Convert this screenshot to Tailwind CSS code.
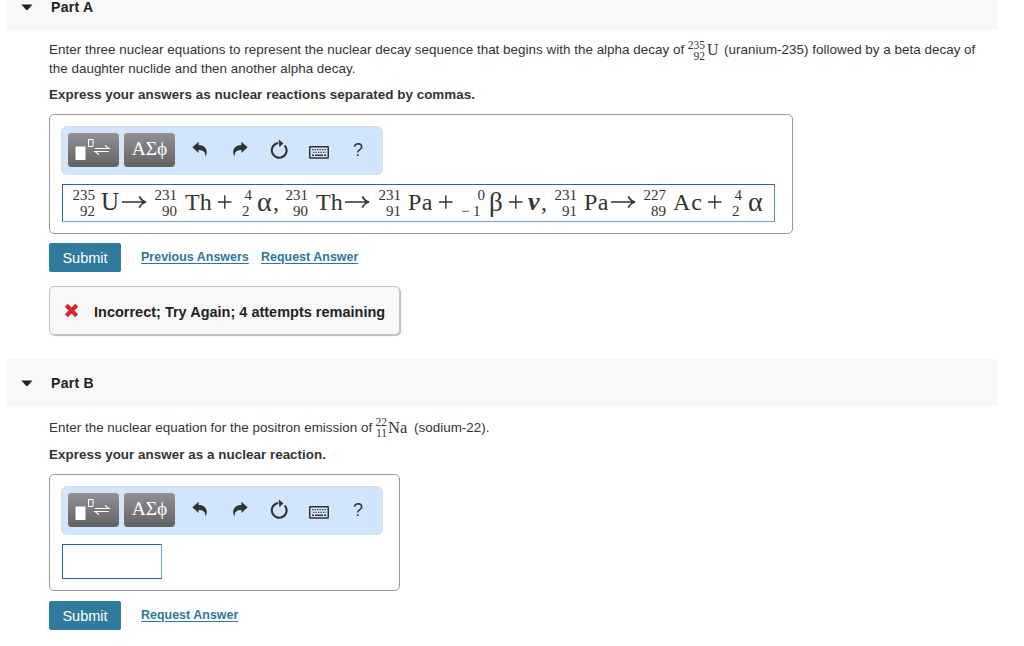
<!DOCTYPE html>
<html lang="en">
<head>
    <meta charset="UTF-8">
    <meta name="viewport" content="width=device-width, initial-scale=1.0">
    <title>Nuclear Equations</title>
    <script src="https://cdn.jsdelivr.net/npm/@tailwindcss/browser@4"></script>
</head>
<body class="bg-white h-[646px] overflow-hidden font-['Liberation_Sans',Arial,sans-serif] text-[13.4px] text-[#333]">
    <!-- shared icons -->
    <svg class="hidden">
        <symbol id="caret" viewBox="0 0 12 7"><path d="M0.3 0.5h11.2L7 5.6q-1.1 1-2.2 0z" fill="#222"/></symbol>
        <symbol id="template" viewBox="0 0 50 33">
            <path d="M7.500 12.500h10v13.500h-10z" fill="#fff"/>
            <path d="M20.500 5.500h4.500v7h-4.500z" fill="none" stroke="#fff"/>
            <path d="M27 14.500h14l-4-3M41 17.500H27l4 3" fill="none" stroke="#fff" stroke-width="1.1"/>
        </symbol>
        <symbol id="undo" viewBox="0 0 16 16"><path d="M0.4 6.3L6.6 0.8v3.3c5 0 8.4 3.1 8.2 7.3 0 1.4-.5 2.7-1.4 4 .2-4.2-2-6.3-6.8-6.3v3z" fill="#333"/></symbol>
        <symbol id="reset" viewBox="0 0 18 20">
            <path d="M14.800 6.500a7.400 7.400 0 1 1-6.500-2.500" fill="none" stroke="#333" stroke-width="2.100"/>
            <path d="M8.700 0.500l4.700 3.800-4 4z" fill="#333"/>
        </symbol>
        <symbol id="keyboard" viewBox="0 0 20 13">
            <rect x="0.75" y="0.75" width="18.5" height="11.3" rx="0.5" fill="none" stroke="#333" stroke-width="1.5"/>
            <path d="M3 3.700h14M4 6.300h13" stroke="#333" stroke-width="1.2" stroke-dasharray="1.3 1.2"/>
            <path d="M3 9.200h2M6 9.200h8M15 9.200h2" stroke="#333" stroke-width="1.4"/>
        </symbol>
        <symbol id="arrow" viewBox="0 0 25 14"><path d="M0 7h23.500M17.300 1.300q2 4.500 6.700 5.700q-4.700 1.200-6.700 5.700" fill="none" stroke="#333" stroke-width="1.7"/></symbol>
        <symbol id="plus" viewBox="0 0 14 14"><path d="M0 7h13.500M6.800 0.300v13.400" fill="none" stroke="#333" stroke-width="1.4"/></symbol>
        <symbol id="cross" viewBox="0 0 15 15"><path d="M2.300 2.300L12.700 12.700M12.700 2.300L2.300 12.700" stroke="#cf2a2e" stroke-width="4.200"/></symbol>
    </svg>

    <!-- Part A -->
    <section class="h-[359px]">
        <header class="ml-[7px] w-[990px] h-[30px] bg-[#f8f8f8] flex items-start pl-[14px]">
            <svg class="w-[12px] h-[7px] mt-[4px]"><use href="#caret"/></svg>
            <h2 class="ml-[18px] -mt-[1px] leading-4 text-[14px] font-bold text-[#222] tracking-[0.3px]">Part A</h2>
        </header>
        <div class="pl-[49px]">
            <div class="pt-[10px] h-[55px] leading-[19px] whitespace-nowrap">
                <p class="flex h-[19px] tracking-[0.03px]">
                    <span class="w-[639px]">Enter three nuclear equations to represent the nuclear decay sequence that begins with the alpha decay of</span>
                    <span class="w-[17px] h-[19px] flex flex-col items-end font-['Liberation_Serif',serif] text-[11.5px] leading-[10.5px] tracking-normal"><span>235</span><span>92</span></span>
                    <span class="ml-[2px] w-[17px] font-['Liberation_Serif',serif] text-[16px]">U</span>
                    <span>(uranium-235) followed by a beta decay of</span>
                </p>
                <p class="tracking-[0.03px]">the daughter nuclide and then another alpha decay.</p>
            </div>
            <p class="h-[29px] leading-[20px] font-bold tracking-[0.04px] whitespace-nowrap">Express your answers as nuclear reactions separated by commas.</p>
            <div class="w-[744px] h-[120px] border border-[#999] rounded-[5px] pl-[11px] pt-[11px]">
                <div class="w-[322px] h-[49px] bg-[#d1e5fe] border border-[#ddd] rounded-[6px] flex items-start pl-[5px] pt-[5px]">
                    <button class="w-[52px] h-[35px] rounded-[4px] border-t border-l border-white/80 bg-linear-to-b from-[#929196] to-[#626263]"><svg class="w-[50px] h-[33px]"><use href="#template"/></svg></button>
                    <button class="ml-[4px] w-[52px] h-[35px] rounded-[4px] border-t border-l border-white/80 bg-linear-to-b from-[#929196] to-[#626263] text-white text-[19.5px] leading-[28px] pb-[3px] font-['Liberation_Serif',serif]">ΑΣϕ</button>
                    <svg class="ml-[17px] mt-[9px] w-[16px] h-[16px]"><use href="#undo"/></svg>
                    <svg class="ml-[24px] mt-[9px] w-[16px] h-[16px] -scale-x-100"><use href="#undo"/></svg>
                    <svg class="ml-[22px] mt-[7px] w-[18px] h-[20px]"><use href="#reset"/></svg>
                    <svg class="ml-[21px] mt-[14px] w-[20px] h-[13px]"><use href="#keyboard"/></svg>
                    <span class="ml-[24px] mt-[8px] text-[18px] leading-[20px]">?</span>
                </div>
                <!-- answer -->
                <div class="mt-[9px] ml-px w-[713px] h-[38px] border border-[#2b5fc4] border-b-[#7b9ee3] border-r-[#5c86d8] flex items-start pl-[9px] font-['Liberation_Serif',serif] text-[24px] leading-[34px] whitespace-nowrap">
                    <span class="w-[23px] pt-[2px] flex flex-col items-end text-[15px] leading-[16px]"><span>235</span><span>92</span></span>
                    <span class="ml-[6px] w-[21px] text-[25px]">U</span>
                    <svg class="mt-[10px] w-[25px] h-[14px]"><use href="#arrow"/></svg>
                    <span class="ml-[7px] w-[23px] pt-[2px] flex flex-col items-end text-[15px] leading-[16px]"><span>231</span><span>90</span></span>
                    <span class="ml-[8px] w-[33px]">Th</span>
                    <svg class="mt-[10px] w-[14px] h-[14px]"><use href="#plus"/></svg>
                    <span class="ml-[10px] w-[10px] pt-[2px] flex flex-col text-[15px] leading-[16px]"><span class="text-right">4</span><span>2</span></span>
                    <span class="ml-[5px] w-[28px] flex"><span class="w-[16px] text-[28px]">α</span>,</span>
                    <span class="w-[23px] pt-[2px] flex flex-col items-end text-[15px] leading-[16px]"><span>231</span><span>90</span></span>
                    <span class="ml-[8px] w-[29px]">Th</span>
                    <svg class="mt-[10px] w-[25px] h-[14px]"><use href="#arrow"/></svg>
                    <span class="ml-[8px] w-[23px] pt-[2px] flex flex-col items-end text-[15px] leading-[16px]"><span>231</span><span>91</span></span>
                    <span class="ml-[7px] w-[31px] tracking-[0.5px]">Pa</span>
                    <svg class="mt-[10px] w-[14px] h-[14px]"><use href="#plus"/></svg>
                    <span class="ml-[8px] w-[24px] pt-[2px] flex flex-col text-[15px] leading-[16px]"><span class="text-right">0</span><span class="flex"><span class="w-[12px]">−</span>1</span></span>
                    <span class="ml-[4px] w-[20px] text-[27px]">β</span>
                    <svg class="mt-[10px] w-[14px] h-[14px]"><use href="#plus"/></svg>
                    <span class="ml-[5px] w-[26px] flex"><span class="w-[13px] italic font-bold text-[26px]">ν</span>,</span>
                    <span class="w-[23px] pt-[2px] flex flex-col items-end text-[15px] leading-[16px]"><span>231</span><span>91</span></span>
                    <span class="ml-[7px] w-[27px] tracking-[0.5px]">Pa</span>
                    <svg class="mt-[10px] w-[25px] h-[14px]"><use href="#arrow"/></svg>
                    <span class="ml-[7px] w-[23px] pt-[2px] flex flex-col items-end text-[15px] leading-[16px]"><span>227</span><span>89</span></span>
                    <span class="ml-[7px] w-[35px] tracking-[1px]">Ac</span>
                    <svg class="mt-[10px] w-[14px] h-[14px]"><use href="#plus"/></svg>
                    <span class="ml-[10px] w-[10px] pt-[2px] flex flex-col text-[15px] leading-[16px]"><span class="text-right">4</span><span>2</span></span>
                    <span class="ml-[6px] text-[28px]">α</span>
                </div>
            </div>
            <div class="mt-[9px] flex items-start">
                <button class="w-[72px] h-[29px] rounded-[2px] bg-[#307b9b] text-white text-[14.5px] pt-[2px]">Submit</button>
                <a href="#" class="ml-[20px] mt-[4px] w-[120px] leading-[20px] text-[12.4px] font-bold tracking-[0.05px] text-[#2b7896] underline underline-offset-2">Previous Answers</a>
                <a href="#" class="mt-[4px] leading-[20px] text-[12.4px] font-bold tracking-[0.05px] text-[#2b7896] underline underline-offset-2">Request Answer</a>
            </div>
            <div class="mt-[14px] w-[351px] h-[49px] bg-[#f8f8f8] border border-[#c4c4c4] rounded-[5px] shadow-[1px_1px_1px_#bbb] flex items-center pl-[14px]">
                <svg class="w-[15px] h-[15px]"><use href="#cross"/></svg>
                <span class="ml-[15px] mt-[4px] text-[14.5px] font-bold text-[#222] whitespace-nowrap">Incorrect; Try Again; 4 attempts remaining</span>
            </div>
        </div>
    </section>

    <!-- Part B -->
    <section>
        <header class="ml-[7px] w-[990px] h-[47px] bg-[#f8f8f8] flex items-start pl-[14px]">
            <svg class="w-[12px] h-[7px] mt-[21px]"><use href="#caret"/></svg>
            <h2 class="ml-[18px] mt-[16px] leading-4 text-[14px] font-bold text-[#222] tracking-[0.3px]">Part B</h2>
        </header>
        <div class="pl-[49px]">
            <p class="pt-[12px] h-[39px] flex leading-[19px] tracking-[0.03px] whitespace-nowrap">
                <span class="w-[327px]">Enter the nuclear equation for the positron emission of</span>
                <span class="w-[11px] h-[19px] flex flex-col items-end font-['Liberation_Serif',serif] text-[11.5px] leading-[10.5px] tracking-normal -mt-[1px]"><span>22</span><span>11</span></span>
                <span class="ml-px w-[26px] font-['Liberation_Serif',serif] text-[16.5px]">Na</span>
                <span>(sodium-22).</span>
            </p>
            <p class="h-[29px] leading-[20px] font-bold tracking-[0.04px]">Express your answer as a nuclear reaction.</p>
            <div class="w-[351px] h-[117px] border border-[#999] rounded-[5px] pl-[11px] pt-[11px]">
                <div class="w-[322px] h-[49px] bg-[#d1e5fe] border border-[#ddd] rounded-[6px] flex items-start pl-[5px] pt-[5px]">
                    <button class="w-[52px] h-[35px] rounded-[4px] border-t border-l border-white/80 bg-linear-to-b from-[#929196] to-[#626263]"><svg class="w-[50px] h-[33px]"><use href="#template"/></svg></button>
                    <button class="ml-[4px] w-[52px] h-[35px] rounded-[4px] border-t border-l border-white/80 bg-linear-to-b from-[#929196] to-[#626263] text-white text-[19.5px] leading-[28px] pb-[3px] font-['Liberation_Serif',serif]">ΑΣϕ</button>
                    <svg class="ml-[17px] mt-[9px] w-[16px] h-[16px]"><use href="#undo"/></svg>
                    <svg class="ml-[24px] mt-[9px] w-[16px] h-[16px] -scale-x-100"><use href="#undo"/></svg>
                    <svg class="ml-[22px] mt-[7px] w-[18px] h-[20px]"><use href="#reset"/></svg>
                    <svg class="ml-[21px] mt-[14px] w-[20px] h-[13px]"><use href="#keyboard"/></svg>
                    <span class="ml-[24px] mt-[8px] text-[18px] leading-[20px]">?</span>
                </div>
                <div class="mt-[9px] ml-px w-[100px] h-[35px] border border-[#2b5fc4] border-r-[#7b9ee3]"></div>
            </div>
            <div class="mt-[10px] flex items-start">
                <button class="w-[72px] h-[29px] rounded-[2px] bg-[#307b9b] text-white text-[14.5px] pt-[2px]">Submit</button>
                <a href="#" class="ml-[20px] mt-[4px] leading-[20px] text-[12.4px] font-bold tracking-[0.05px] text-[#2b7896] underline underline-offset-2">Request Answer</a>
            </div>
        </div>
    </section>
</body>
</html>
